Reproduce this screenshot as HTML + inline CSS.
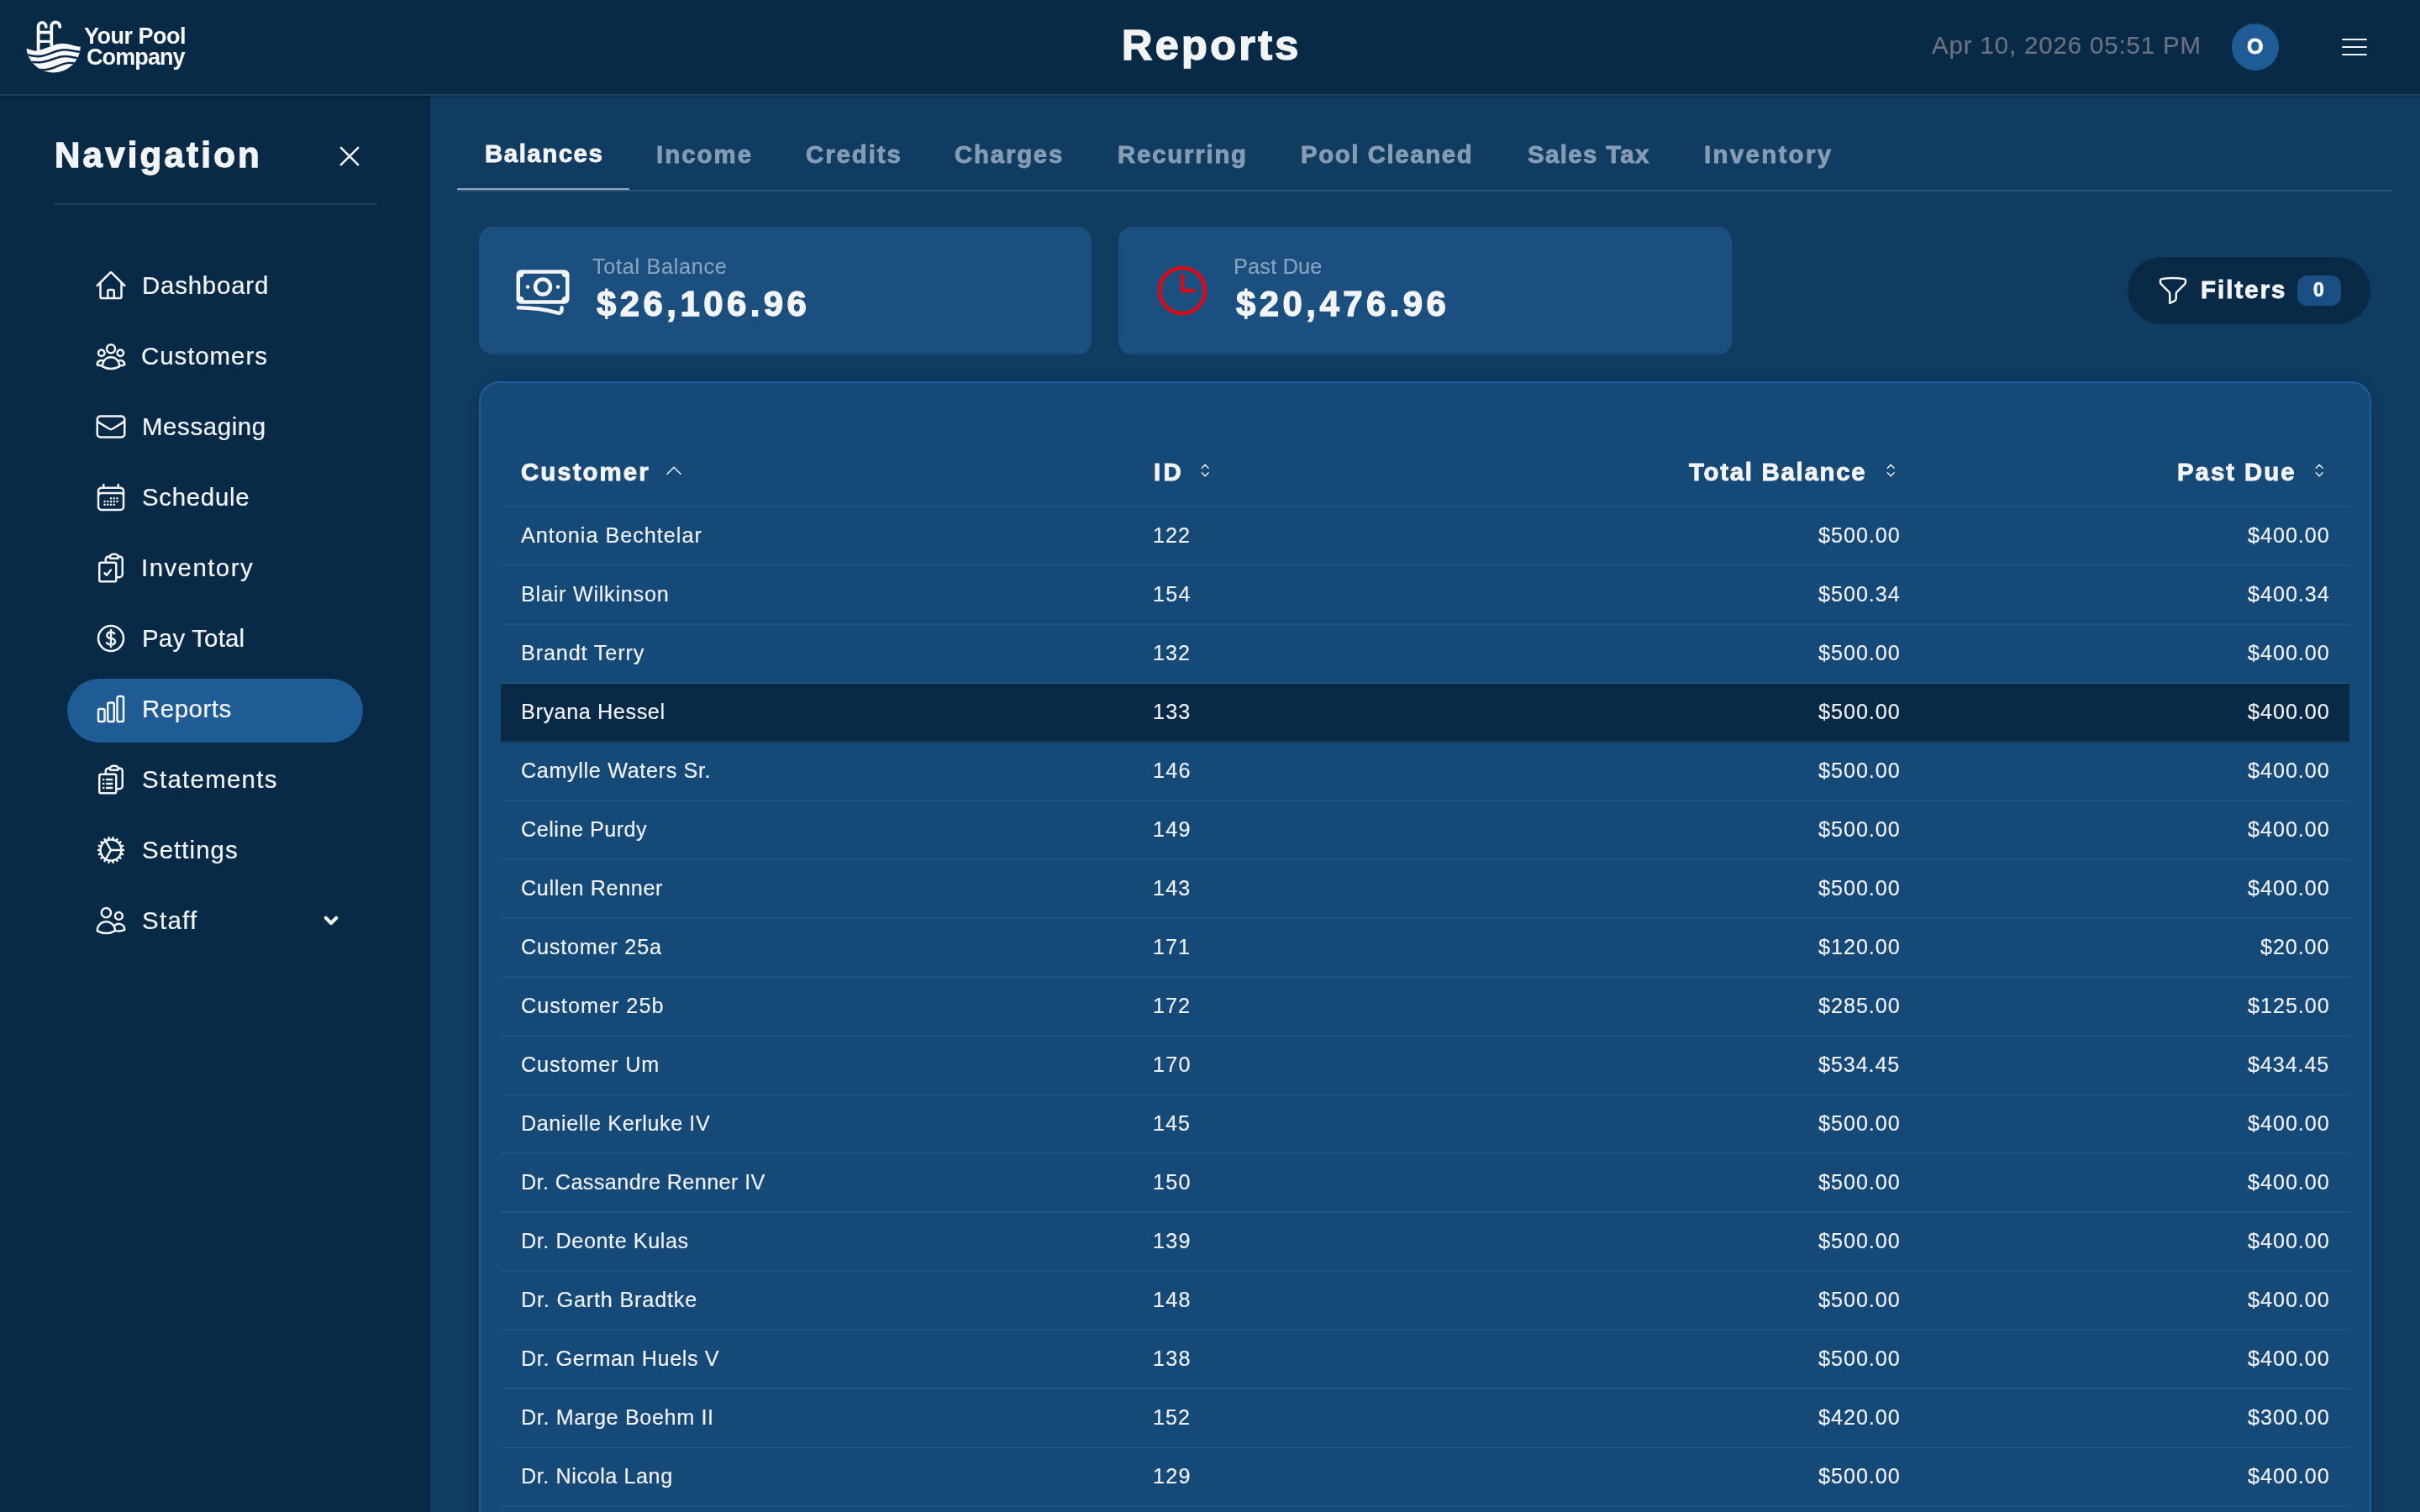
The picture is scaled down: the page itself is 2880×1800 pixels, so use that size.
<!DOCTYPE html>
<html><head><meta charset="utf-8">
<style>
*{box-sizing:border-box;margin:0;padding:0}
html,body{width:2880px;height:1800px;overflow:hidden;background:#103c62}
body{font-family:"Liberation Sans",sans-serif;color:#f3f4f6}
#app{position:absolute;left:0;top:0;width:1440px;height:900px;zoom:2;overflow:hidden;background:#103c62}
.abs{position:absolute}
.t{position:absolute;white-space:nowrap;line-height:1;will-change:transform}
svg{position:absolute;overflow:visible}
@media (max-width:2000px){html,body{width:1440px;height:900px} #app{zoom:1}}
</style></head>
<body>
<div id="app">
<div class="abs" style="left:0px;top:0px;width:1440px;height:56px;background:#082a47;"></div>
<div class="abs" style="left:0px;top:56px;width:1440px;height:1px;background:#21405e;"></div>
<div class="abs" style="left:0px;top:57px;width:1440px;height:2px;background:linear-gradient(rgba(0,0,0,.18),rgba(0,0,0,0));z-index:5;"></div>
<svg style="left:10px;top:7.5px;width:105px;height:40px" viewBox="0 0 2420 922">
<defs><clipPath id="bowl"><circle cx="502" cy="452" r="373"/></clipPath></defs>
<g clip-path="url(#bowl)">
<path d="M0 470 C 150 470 200 540 300 520 C 450 480 520 420 650 425 C 760 430 800 470 900 470 L 900 922 L 0 922 Z" fill="#f8f9fb"/>
<path d="M0 560 C 150 570 220 610 320 600 C 460 580 540 505 660 510 C 760 515 820 540 900 540" stroke="#0b2846" stroke-width="30" fill="none"/>
<path d="M0 660 C 150 670 240 690 340 680 C 470 670 560 590 680 600 C 770 608 830 630 900 630" stroke="#0b2846" stroke-width="30" fill="none"/>
<path d="M0 760 C 150 770 260 780 370 785 C 500 790 600 690 720 690 C 800 690 850 700 900 700" stroke="#0b2846" stroke-width="28" fill="none"/>
</g>
<path d="M295 505 V190 A52 52 0 0 1 400 190 V195" stroke="#f8f9fb" stroke-width="44" fill="none" stroke-linecap="round"/>
<path d="M475 440 V190 A57 57 0 0 1 590 190 V195" stroke="#f8f9fb" stroke-width="44" fill="none" stroke-linecap="round"/>
<rect x="295" y="250" width="180" height="42" fill="#f8f9fb"/>
<rect x="295" y="378" width="180" height="36" fill="#f8f9fb"/>
</svg>
<div class="t" style="left:49.90px;top:15.07px;font-size:13.5px;font-weight:bold;color:#f8f9fb;letter-spacing:-0.250px;">Your Pool</div>
<div class="t" style="left:51.40px;top:27.32px;font-size:13.5px;font-weight:bold;color:#f8f9fb;letter-spacing:-0.450px;">Company</div>
<div class="t" style="left:667.49px;top:14.71px;font-size:25.2px;font-weight:bold;-webkit-text-stroke:0.756px #f3f4f6;color:#f3f4f6;letter-spacing:1.667px;">Reports</div>
<div class="t" style="left:1149.53px;top:19.70px;font-size:14.7px;-webkit-text-stroke:0.103px #6b7280;color:#6b7280;letter-spacing:0.444px;">Apr 10, 2026 05:51 PM</div>
<div class="abs" style="left:1328px;top:14px;width:28px;height:28px;background:#1f5c96;border-radius:50%;"></div>
<div class="t" style="left:1337.02px;top:21.63px;font-size:12.6px;font-weight:bold;-webkit-text-stroke:0.378px #f8f9fb;color:#f8f9fb;letter-spacing:0.000px;">O</div>
<div class="abs" style="left:1393.5px;top:22.98px;width:15.1px;height:1.25px;background:#f3f4f6;border-radius:1px;"></div>
<div class="abs" style="left:1393.5px;top:27.43px;width:15.1px;height:1.25px;background:#f3f4f6;border-radius:1px;"></div>
<div class="abs" style="left:1393.5px;top:31.78px;width:15.1px;height:1.25px;background:#f3f4f6;border-radius:1px;"></div>
<div class="abs" style="left:0px;top:57px;width:256px;height:843px;background:#082a47;"></div>
<div class="t" style="left:32.38px;top:82.17px;font-size:21.0px;font-weight:bold;-webkit-text-stroke:0.63px #f3f4f6;color:#f3f4f6;letter-spacing:1.611px;">Navigation</div>
<svg style="left:200px;top:85px;width:16px;height:16px" viewBox="0 0 16 16"><path d="M2.9 2.9 13.1 13.1M13.1 2.9 2.9 13.1" stroke="#f3f4f6" stroke-width="1.25" stroke-linecap="round"/></svg>
<div class="abs" style="left:32px;top:121px;width:192px;height:1px;background:#1f3c5a;"></div>
<div class="abs" style="left:40px;top:404px;width:176px;height:38px;background:#1f5c96;border-radius:19px;"></div>
<svg style="left:56px;top:160.0px;width:20px;height:20px" viewBox="0 0 24 24" fill="none" stroke="#f3f4f6" stroke-width="1.5" stroke-linecap="round" stroke-linejoin="round"><path d="m2.25 12 8.954-8.955c.44-.439 1.152-.439 1.591 0L21.75 12M4.5 9.75v10.125c0 .621.504 1.125 1.125 1.125H9.75v-4.875c0-.621.504-1.125 1.125-1.125h2.25c.621 0 1.125.504 1.125 1.125V21h4.125c.621 0 1.125-.504 1.125-1.125V9.75M8.25 21h8.25"/></svg>
<div class="t" style="left:84.25px;top:162.45px;font-size:14.7px;-webkit-text-stroke:0.103px #f3f4f6;color:#f3f4f6;letter-spacing:0.406px;">Dashboard</div>
<svg style="left:56px;top:202.0px;width:20px;height:20px" viewBox="0 0 24 24" fill="none" stroke="#f3f4f6" stroke-width="1.5" stroke-linecap="round" stroke-linejoin="round"><path d="M18 18.72a9.094 9.094 0 0 0 3.741-.479 3 3 0 0 0-4.682-2.72m.94 3.198.001.031c0 .225-.012.447-.037.666A11.944 11.944 0 0 1 12 21c-2.17 0-4.207-.576-5.963-1.584A6.062 6.062 0 0 1 6 18.719m12 0a5.971 5.971 0 0 0-.941-3.197m0 0A5.995 5.995 0 0 0 12 12.75a5.995 5.995 0 0 0-5.058 2.772m0 0a3 3 0 0 0-4.681 2.72 8.986 8.986 0 0 0 3.74.477m.94-3.197a5.971 5.971 0 0 0-.94 3.197M15 6.75a3 3 0 1 1-6 0 3 3 0 0 1 6 0Zm6 3a2.25 2.25 0 1 1-4.5 0 2.25 2.25 0 0 1 4.5 0Zm-13.5 0a2.25 2.25 0 1 1-4.5 0 2.25 2.25 0 0 1 4.5 0Z"/></svg>
<div class="t" style="left:84.00px;top:204.45px;font-size:14.7px;-webkit-text-stroke:0.103px #f3f4f6;color:#f3f4f6;letter-spacing:0.484px;">Customers</div>
<svg style="left:56px;top:244.0px;width:20px;height:20px" viewBox="0 0 24 24" fill="none" stroke="#f3f4f6" stroke-width="1.5" stroke-linecap="round" stroke-linejoin="round"><path d="M21.75 6.75v10.5a2.25 2.25 0 0 1-2.25 2.25h-15a2.25 2.25 0 0 1-2.25-2.25V6.75m19.5 0A2.25 2.25 0 0 0 19.5 4.5h-15a2.25 2.25 0 0 0-2.25 2.25m19.5 0v.243a2.25 2.25 0 0 1-1.07 1.916l-7.5 4.615a2.25 2.25 0 0 1-2.36 0L3.32 8.91a2.25 2.25 0 0 1-1.07-1.916V6.75"/></svg>
<div class="t" style="left:84.25px;top:246.45px;font-size:14.7px;-webkit-text-stroke:0.103px #f3f4f6;color:#f3f4f6;letter-spacing:0.312px;">Messaging</div>
<svg style="left:56px;top:286.0px;width:20px;height:20px" viewBox="0 0 24 24" fill="none" stroke="#f3f4f6" stroke-width="1.5" stroke-linecap="round" stroke-linejoin="round"><path d="M6.75 3v2.25M17.25 3v2.25M3 18.75V7.5a2.25 2.25 0 0 1 2.25-2.25h13.5A2.25 2.25 0 0 1 21 7.5v11.25m-18 0A2.25 2.25 0 0 0 5.25 21h13.5A2.25 2.25 0 0 0 21 18.75m-18 0v-7.5A2.25 2.25 0 0 1 5.25 9h13.5A2.25 2.25 0 0 1 21 11.25v7.5m-9-6h.008v.008H12v-.008ZM12 15h.008v.008H12V15Zm0 2.25h.008v.008H12v-.008ZM9.75 15h.008v.008H9.75V15Zm0 2.25h.008v.008H9.75v-.008ZM7.5 15h.008v.008H7.5V15Zm0 2.25h.008v.008H7.5v-.008Zm6.75-4.5h.008v.008h-.008v-.008Zm0 2.25h.008v.008h-.008V15Zm0 2.25h.008v.008h-.008v-.008Zm2.25-4.5h.008v.008H16.5v-.008Zm0 2.25h.008v.008H16.5V15Z"/></svg>
<div class="t" style="left:84.25px;top:288.45px;font-size:14.7px;-webkit-text-stroke:0.103px #f3f4f6;color:#f3f4f6;letter-spacing:0.357px;">Schedule</div>
<svg style="left:56px;top:328.0px;width:20px;height:20px" viewBox="0 0 24 24" fill="none" stroke="#f3f4f6" stroke-width="1.5" stroke-linecap="round" stroke-linejoin="round"><path d="M11.35 3.836c-.065.21-.1.433-.1.664 0 .414.336.75.75.75h4.5a.75.75 0 0 0 .75-.75 2.25 2.25 0 0 0-.1-.664m-5.8 0A2.251 2.251 0 0 1 13.5 2.25H15c1.012 0 1.867.668 2.15 1.586m-5.8 0c-.376.023-.75.05-1.124.08C9.095 4.01 8.25 4.973 8.25 6.108V8.25m8.9-4.414c.376.023.75.05 1.124.08 1.131.094 1.976 1.057 1.976 2.192V16.5A2.25 2.25 0 0 1 18 18.75h-2.25m-7.5-10.5H4.875c-.621 0-1.125.504-1.125 1.125v11.25c0 .621.504 1.125 1.125 1.125h9.75c.621 0 1.125-.504 1.125-1.125V18.75m-7.5-10.5h6.375c.621 0 1.125.504 1.125 1.125v9.375m-8.25-3 1.5 1.5 3-3.75"/></svg>
<div class="t" style="left:84.00px;top:330.45px;font-size:14.7px;-webkit-text-stroke:0.103px #f3f4f6;color:#f3f4f6;letter-spacing:0.734px;">Inventory</div>
<svg style="left:56px;top:370.0px;width:20px;height:20px" viewBox="0 0 24 24" fill="none" stroke="#f3f4f6" stroke-width="1.5" stroke-linecap="round" stroke-linejoin="round"><path d="M12 6v12m-3-2.818.879.659c1.171.879 3.07.879 4.242 0 1.172-.879 1.172-2.303 0-3.182C13.536 12.219 12.768 12 12 12c-.725 0-1.45-.22-2.003-.659-1.106-.879-1.106-2.303 0-3.182s2.9-.879 4.006 0l.415.33M21 12a9 9 0 1 1-18 0 9 9 0 0 1 18 0Z"/></svg>
<div class="t" style="left:84.25px;top:372.45px;font-size:14.7px;-webkit-text-stroke:0.103px #f3f4f6;color:#f3f4f6;letter-spacing:0.109px;">Pay Total</div>
<svg style="left:56px;top:412.0px;width:20px;height:20px" viewBox="0 0 24 24" fill="none" stroke="#f3f4f6" stroke-width="1.5" stroke-linecap="round" stroke-linejoin="round"><path d="M3 13.125C3 12.504 3.504 12 4.125 12h2.25c.621 0 1.125.504 1.125 1.125v6.75C7.5 20.496 6.996 21 6.375 21h-2.25A1.125 1.125 0 0 1 3 19.875v-6.75ZM9.75 8.625c0-.621.504-1.125 1.125-1.125h2.25c.621 0 1.125.504 1.125 1.125v11.25c0 .621-.504 1.125-1.125 1.125h-2.25a1.125 1.125 0 0 1-1.125-1.125V8.625ZM16.5 4.125c0-.621.504-1.125 1.125-1.125h2.25C20.496 3 21 3.504 21 4.125v15.75c0 .621-.504 1.125-1.125 1.125h-2.25a1.125 1.125 0 0 1-1.125-1.125V4.125Z"/></svg>
<div class="t" style="left:84.25px;top:414.45px;font-size:14.7px;-webkit-text-stroke:0.103px #f3f4f6;color:#f3f4f6;letter-spacing:0.271px;">Reports</div>
<svg style="left:56px;top:454.0px;width:20px;height:20px" viewBox="0 0 24 24" fill="none" stroke="#f3f4f6" stroke-width="1.5" stroke-linecap="round" stroke-linejoin="round"><path d="M9 12h3.75M9 15h3.75M9 18h3.75m3 .75H18a2.25 2.25 0 0 0 2.25-2.25V6.108c0-1.135-.845-2.098-1.976-2.192a48.424 48.424 0 0 0-1.123-.08m-5.801 0c-.065.21-.1.433-.1.664 0 .414.336.75.75.75h4.5a.75.75 0 0 0 .75-.75 2.25 2.25 0 0 0-.1-.664m-5.8 0A2.251 2.251 0 0 1 13.5 2.25H15c1.012 0 1.867.668 2.15 1.586m-5.8 0c-.376.023-.75.05-1.124.08C9.095 4.01 8.25 4.973 8.25 6.108V8.25m0 0H4.875c-.621 0-1.125.504-1.125 1.125v11.25c0 .621.504 1.125 1.125 1.125h9.75c.621 0 1.125-.504 1.125-1.125V9.375c0-.621-.504-1.125-1.125-1.125H8.25ZM6.75 12h.008v.008H6.75V12Zm0 3h.008v.008H6.75V15Zm0 3h.008v.008H6.75V18Z"/></svg>
<div class="t" style="left:84.25px;top:456.45px;font-size:14.7px;-webkit-text-stroke:0.103px #f3f4f6;color:#f3f4f6;letter-spacing:0.653px;">Statements</div>
<svg style="left:56px;top:496.0px;width:20px;height:20px" viewBox="0 0 24 24" fill="none" stroke="#f3f4f6" stroke-width="1.5" stroke-linecap="round" stroke-linejoin="round"><path d="M4.5 12a7.5 7.5 0 0 0 15 0m-15 0a7.5 7.5 0 1 1 15 0m-15 0H3m16.5 0H21m-1.5 0H12m-8.457 3.077 1.41-.513m14.095-5.13 1.41-.513M5.106 17.785l1.15-.964m11.49-9.642 1.149-.964M7.501 19.795l.75-1.3m7.5-12.99.75-1.3m-6.063 16.658.26-1.477m2.605-14.772.26-1.477m0 17.726-.26-1.477M10.698 4.614l-.26-1.477M16.5 19.794l-.75-1.299M7.5 4.205 12 12m6.894 5.785-1.149-.964M6.256 7.178l-1.15-.964m15.352 8.864-1.41-.513M4.954 9.435l-1.41-.514M12.002 12l-3.75 6.495"/></svg>
<div class="t" style="left:84.25px;top:498.45px;font-size:14.7px;-webkit-text-stroke:0.103px #f3f4f6;color:#f3f4f6;letter-spacing:0.536px;">Settings</div>
<svg style="left:56px;top:538.0px;width:20px;height:20px" viewBox="0 0 24 24" fill="none" stroke="#f3f4f6" stroke-width="1.5" stroke-linecap="round" stroke-linejoin="round"><path d="M15 19.128a9.38 9.38 0 0 0 2.625.372 9.337 9.337 0 0 0 4.121-.952 4.125 4.125 0 0 0-7.533-2.493M15 19.128v-.003c0-1.113-.285-2.16-.786-3.07M15 19.128v.106A12.318 12.318 0 0 1 8.624 21c-2.331 0-4.512-.645-6.374-1.766l-.001-.109a6.375 6.375 0 0 1 11.964-3.07M12 6.375a3.375 3.375 0 1 1-6.75 0 3.375 3.375 0 0 1 6.75 0Zm8.25 2.25a2.625 2.625 0 1 1-5.25 0 2.625 2.625 0 0 1 5.25 0Z"/></svg>
<div class="t" style="left:84.25px;top:540.45px;font-size:14.7px;-webkit-text-stroke:0.103px #f3f4f6;color:#f3f4f6;letter-spacing:0.656px;">Staff</div>
<svg style="left:191px;top:542.0px;width:12px;height:12px" viewBox="0 0 12 12"><path d="M2.9 4.4 6 7.5 9.1 4.4" stroke="#f3f4f6" stroke-width="2.1" fill="none" stroke-linecap="round" stroke-linejoin="round"/></svg>
<div class="abs" style="left:256px;top:57px;width:1184px;height:843px;background:#103c62;"></div>
<div class="abs" style="left:272px;top:113px;width:1152px;height:1px;background:#2f5479;"></div>
<div class="t" style="left:288.25px;top:83.80px;font-size:14.7px;font-weight:bold;-webkit-text-stroke:0.441px #f3f4f6;color:#f3f4f6;letter-spacing:0.768px;">Balances</div>
<div class="abs" style="left:272px;top:112px;width:102.46875px;height:1px;background:#8fa6be;"></div>
<div class="t" style="left:390.72px;top:84.60px;font-size:14.7px;font-weight:bold;-webkit-text-stroke:0.441px #869cb4;color:#869cb4;letter-spacing:1.025px;">Income</div>
<div class="t" style="left:479.65px;top:84.60px;font-size:14.7px;font-weight:bold;-webkit-text-stroke:0.441px #869cb4;color:#869cb4;letter-spacing:0.958px;">Credits</div>
<div class="t" style="left:568.18px;top:84.60px;font-size:14.7px;font-weight:bold;-webkit-text-stroke:0.441px #869cb4;color:#869cb4;letter-spacing:0.896px;">Charges</div>
<div class="t" style="left:664.88px;top:84.60px;font-size:14.7px;font-weight:bold;-webkit-text-stroke:0.441px #869cb4;color:#869cb4;letter-spacing:0.891px;">Recurring</div>
<div class="t" style="left:774.03px;top:84.60px;font-size:14.7px;font-weight:bold;-webkit-text-stroke:0.441px #869cb4;color:#869cb4;letter-spacing:0.795px;">Pool Cleaned</div>
<div class="t" style="left:909.08px;top:84.60px;font-size:14.7px;font-weight:bold;-webkit-text-stroke:0.441px #869cb4;color:#869cb4;letter-spacing:0.688px;">Sales Tax</div>
<div class="t" style="left:1013.97px;top:84.60px;font-size:14.7px;font-weight:bold;-webkit-text-stroke:0.441px #869cb4;color:#869cb4;letter-spacing:1.172px;">Inventory</div>
<div class="abs" style="left:285px;top:135px;width:364.67px;height:76px;background:#1a4f80;border-radius:8px;"></div>
<svg style="left:305px;top:155px;width:36px;height:36px" viewBox="0 0 24 24" fill="none" stroke="#f3f4f6" stroke-width="1.5" stroke-linecap="round" stroke-linejoin="round"><path d="M2.25 18.75a60.07 60.07 0 0 1 15.797 2.101c.727.198 1.453-.342 1.453-1.096V18.75M3.75 4.5v.75A.75.75 0 0 1 3 6h-.75m0 0v-.375c0-.621.504-1.125 1.125-1.125H20.25M2.25 6v9m18-10.5v.75c0 .414.336.75.75.75h.75m-1.5-1.5h.375c.621 0 1.125.504 1.125 1.125v9.75c0 .621-.504 1.125-1.125 1.125h-.375m1.5-1.5H21a.75.75 0 0 0-.75.75v.75m0 0H3.75m0 0h-.375a1.125 1.125 0 0 1-1.125-1.125V15m1.5 1.5v-.75A.75.75 0 0 0 3 15h-.75M15 10.5a3 3 0 1 1-6 0 3 3 0 0 1 6 0Zm3 0h.008v.008H18V10.5Zm-12 0h.008v.008H6V10.5Z"/></svg>
<div class="t" style="left:352.62px;top:152.63px;font-size:12.6px;-webkit-text-stroke:0.088px #88a3be;color:#88a3be;letter-spacing:0.354px;">Total Balance</div>
<div class="t" style="left:354.75px;top:170.42px;font-size:21.0px;font-weight:bold;-webkit-text-stroke:0.63px #f3f4f6;color:#f3f4f6;letter-spacing:2.208px;">$26,106.96</div>
<div class="abs" style="left:665.67px;top:135px;width:364.67px;height:76px;background:#1a4f80;border-radius:8px;"></div>
<svg style="left:685.67px;top:155px;width:36px;height:36px" viewBox="0 0 24 24" fill="none" stroke="#dc0a14" stroke-width="1.5" stroke-linecap="round" stroke-linejoin="round"><path d="M12 6v6h4.5m4.5 0a9 9 0 1 1-18 0 9 9 0 0 1 18 0Z"/></svg>
<div class="t" style="left:733.79px;top:152.63px;font-size:12.6px;-webkit-text-stroke:0.088px #88a3be;color:#88a3be;letter-spacing:0.125px;">Past Due</div>
<div class="t" style="left:735.42px;top:170.42px;font-size:21.0px;font-weight:bold;-webkit-text-stroke:0.63px #f3f4f6;color:#f3f4f6;letter-spacing:2.208px;">$20,476.96</div>
<div class="abs" style="left:1266px;top:153px;width:144.5px;height:40px;background:#082a47;border-radius:20px;"></div>
<svg style="left:1283px;top:163px;width:20px;height:20px" viewBox="0 0 24 24" fill="none" stroke="#f3f4f6" stroke-width="1.5" stroke-linecap="round" stroke-linejoin="round"><path d="M12 3c2.755 0 5.455.232 8.083.678.533.09.917.556.917 1.096v1.044a2.25 2.25 0 0 1-.659 1.591l-5.432 5.432a2.25 2.25 0 0 0-.659 1.591v2.927a2.25 2.25 0 0 1-1.244 2.013L9.75 21v-6.568a2.25 2.25 0 0 0-.659-1.591L3.659 7.409A2.25 2.25 0 0 1 3 5.818V4.774c0-.54.384-1.006.917-1.096A48.32 48.32 0 0 1 12 3Z"/></svg>
<div class="t" style="left:1309.25px;top:164.75px;font-size:14.7px;font-weight:bold;-webkit-text-stroke:0.441px #f3f4f6;color:#f3f4f6;letter-spacing:1.021px;">Filters</div>
<div class="abs" style="left:1367px;top:164px;width:26px;height:18px;background:#1b4f84;border-radius:6px;"></div>
<div class="t" style="left:1376.30px;top:167.22px;font-size:11.55px;font-weight:bold;-webkit-text-stroke:0.347px #f3f4f6;color:#f3f4f6;letter-spacing:0.000px;">0</div>
<div class="abs" style="left:285px;top:227px;width:1126px;height:700px;background:#154978;border:1px solid #1f5e9e;border-radius:12px;box-sizing:border-box;box-shadow:0 2px 8px rgba(0,0,0,.18);"></div>
<div class="t" style="left:310.00px;top:273.70px;font-size:14.7px;font-weight:bold;-webkit-text-stroke:0.441px #f3f4f6;color:#f3f4f6;letter-spacing:1.036px;">Customer</div>
<svg style="left:395px;top:275px;width:12px;height:12px" viewBox="0 0 12 12"><path d="M2 7.1 6 3.1 10 7.1" stroke="#f3f4f6" stroke-width="0.75" fill="none" stroke-linecap="round" stroke-linejoin="round"/></svg>
<div class="t" style="left:686.25px;top:273.70px;font-size:14.7px;font-weight:bold;-webkit-text-stroke:0.441px #f3f4f6;color:#f3f4f6;letter-spacing:1.625px;">ID</div>
<svg style="left:711px;top:274px;width:12px;height:12px" viewBox="0 0 12 12"><path d="M4.15 4.6 6.1 2.65 8.05 4.6M4.15 7.4 6.1 9.35 8.05 7.4" stroke="#f3f4f6" stroke-width="0.7" fill="none" stroke-linecap="round" stroke-linejoin="round"/></svg>
<div class="t" style="left:1005.12px;top:273.70px;font-size:14.7px;font-weight:bold;-webkit-text-stroke:0.441px #f3f4f6;color:#f3f4f6;letter-spacing:0.865px;">Total Balance</div>
<svg style="left:1119px;top:274px;width:12px;height:12px" viewBox="0 0 12 12"><path d="M4.15 4.6 6.1 2.65 8.05 4.6M4.15 7.4 6.1 9.35 8.05 7.4" stroke="#f3f4f6" stroke-width="0.7" fill="none" stroke-linecap="round" stroke-linejoin="round"/></svg>
<div class="t" style="left:1295.43px;top:273.70px;font-size:14.7px;font-weight:bold;-webkit-text-stroke:0.441px #f3f4f6;color:#f3f4f6;letter-spacing:0.982px;">Past Due</div>
<svg style="left:1374px;top:274px;width:12px;height:12px" viewBox="0 0 12 12"><path d="M4.15 4.6 6.1 2.65 8.05 4.6M4.15 7.4 6.1 9.35 8.05 7.4" stroke="#f3f4f6" stroke-width="0.7" fill="none" stroke-linecap="round" stroke-linejoin="round"/></svg>
<div class="abs" style="left:298px;top:301px;width:1100px;height:1px;background:rgba(255,255,255,0.055);"></div>
<div class="t" style="left:310.12px;top:312.53px;font-size:12.6px;-webkit-text-stroke:0.088px #eff1f4;color:#eff1f4;letter-spacing:0.500px;">Antonia Bechtelar</div>
<div class="t" style="left:686.08px;top:312.53px;font-size:12.6px;-webkit-text-stroke:0.088px #eff1f4;color:#eff1f4;letter-spacing:0.500px;">122</div>
<div class="t" style="left:1081.75px;top:312.53px;font-size:12.6px;-webkit-text-stroke:0.088px #eff1f4;color:#eff1f4;letter-spacing:0.479px;">$500.00</div>
<div class="t" style="left:1337.25px;top:312.53px;font-size:12.6px;-webkit-text-stroke:0.088px #eff1f4;color:#eff1f4;letter-spacing:0.479px;">$400.00</div>
<div class="abs" style="left:298px;top:336px;width:1100px;height:1px;background:rgba(255,255,255,0.055);"></div>
<div class="t" style="left:310.12px;top:347.53px;font-size:12.6px;-webkit-text-stroke:0.088px #eff1f4;color:#eff1f4;letter-spacing:0.375px;">Blair Wilkinson</div>
<div class="t" style="left:686.08px;top:347.53px;font-size:12.6px;-webkit-text-stroke:0.088px #eff1f4;color:#eff1f4;letter-spacing:0.625px;">154</div>
<div class="t" style="left:1081.75px;top:347.53px;font-size:12.6px;-webkit-text-stroke:0.088px #eff1f4;color:#eff1f4;letter-spacing:0.479px;">$500.34</div>
<div class="t" style="left:1337.25px;top:347.53px;font-size:12.6px;-webkit-text-stroke:0.088px #eff1f4;color:#eff1f4;letter-spacing:0.479px;">$400.34</div>
<div class="abs" style="left:298px;top:371px;width:1100px;height:1px;background:rgba(255,255,255,0.055);"></div>
<div class="t" style="left:310.12px;top:382.53px;font-size:12.6px;-webkit-text-stroke:0.088px #eff1f4;color:#eff1f4;letter-spacing:0.432px;">Brandt Terry</div>
<div class="t" style="left:686.08px;top:382.53px;font-size:12.6px;-webkit-text-stroke:0.088px #eff1f4;color:#eff1f4;letter-spacing:0.500px;">132</div>
<div class="t" style="left:1081.75px;top:382.53px;font-size:12.6px;-webkit-text-stroke:0.088px #eff1f4;color:#eff1f4;letter-spacing:0.479px;">$500.00</div>
<div class="t" style="left:1337.25px;top:382.53px;font-size:12.6px;-webkit-text-stroke:0.088px #eff1f4;color:#eff1f4;letter-spacing:0.479px;">$400.00</div>
<div class="abs" style="left:298px;top:406px;width:1100px;height:1px;background:rgba(255,255,255,0.055);"></div>
<div class="abs" style="left:298px;top:407px;width:1100px;height:35px;background:#082a47;"></div>
<div class="t" style="left:310.12px;top:417.53px;font-size:12.6px;-webkit-text-stroke:0.088px #eff1f4;color:#eff1f4;letter-spacing:0.302px;">Bryana Hessel</div>
<div class="t" style="left:686.08px;top:417.53px;font-size:12.6px;-webkit-text-stroke:0.088px #eff1f4;color:#eff1f4;letter-spacing:0.562px;">133</div>
<div class="t" style="left:1081.75px;top:417.53px;font-size:12.6px;-webkit-text-stroke:0.088px #eff1f4;color:#eff1f4;letter-spacing:0.479px;">$500.00</div>
<div class="t" style="left:1337.25px;top:417.53px;font-size:12.6px;-webkit-text-stroke:0.088px #eff1f4;color:#eff1f4;letter-spacing:0.479px;">$400.00</div>
<div class="abs" style="left:298px;top:441px;width:1100px;height:1px;background:rgba(255,255,255,0.055);"></div>
<div class="t" style="left:310.00px;top:452.53px;font-size:12.6px;-webkit-text-stroke:0.088px #eff1f4;color:#eff1f4;letter-spacing:0.324px;">Camylle Waters Sr.</div>
<div class="t" style="left:686.08px;top:452.53px;font-size:12.6px;-webkit-text-stroke:0.088px #eff1f4;color:#eff1f4;letter-spacing:0.625px;">146</div>
<div class="t" style="left:1081.75px;top:452.53px;font-size:12.6px;-webkit-text-stroke:0.088px #eff1f4;color:#eff1f4;letter-spacing:0.479px;">$500.00</div>
<div class="t" style="left:1337.25px;top:452.53px;font-size:12.6px;-webkit-text-stroke:0.088px #eff1f4;color:#eff1f4;letter-spacing:0.479px;">$400.00</div>
<div class="abs" style="left:298px;top:476px;width:1100px;height:1px;background:rgba(255,255,255,0.055);"></div>
<div class="t" style="left:310.00px;top:487.53px;font-size:12.6px;-webkit-text-stroke:0.088px #eff1f4;color:#eff1f4;letter-spacing:0.250px;">Celine Purdy</div>
<div class="t" style="left:686.08px;top:487.53px;font-size:12.6px;-webkit-text-stroke:0.088px #eff1f4;color:#eff1f4;letter-spacing:0.625px;">149</div>
<div class="t" style="left:1081.75px;top:487.53px;font-size:12.6px;-webkit-text-stroke:0.088px #eff1f4;color:#eff1f4;letter-spacing:0.479px;">$500.00</div>
<div class="t" style="left:1337.25px;top:487.53px;font-size:12.6px;-webkit-text-stroke:0.088px #eff1f4;color:#eff1f4;letter-spacing:0.479px;">$400.00</div>
<div class="abs" style="left:298px;top:511px;width:1100px;height:1px;background:rgba(255,255,255,0.055);"></div>
<div class="t" style="left:310.00px;top:522.53px;font-size:12.6px;-webkit-text-stroke:0.088px #eff1f4;color:#eff1f4;letter-spacing:0.312px;">Cullen Renner</div>
<div class="t" style="left:686.08px;top:522.53px;font-size:12.6px;-webkit-text-stroke:0.088px #eff1f4;color:#eff1f4;letter-spacing:0.562px;">143</div>
<div class="t" style="left:1081.75px;top:522.53px;font-size:12.6px;-webkit-text-stroke:0.088px #eff1f4;color:#eff1f4;letter-spacing:0.479px;">$500.00</div>
<div class="t" style="left:1337.25px;top:522.53px;font-size:12.6px;-webkit-text-stroke:0.088px #eff1f4;color:#eff1f4;letter-spacing:0.479px;">$400.00</div>
<div class="abs" style="left:298px;top:546px;width:1100px;height:1px;background:rgba(255,255,255,0.055);"></div>
<div class="t" style="left:310.00px;top:557.53px;font-size:12.6px;-webkit-text-stroke:0.088px #eff1f4;color:#eff1f4;letter-spacing:0.398px;">Customer 25a</div>
<div class="t" style="left:686.08px;top:557.53px;font-size:12.6px;-webkit-text-stroke:0.088px #eff1f4;color:#eff1f4;letter-spacing:0.500px;">171</div>
<div class="t" style="left:1081.75px;top:557.53px;font-size:12.6px;-webkit-text-stroke:0.088px #eff1f4;color:#eff1f4;letter-spacing:0.479px;">$120.00</div>
<div class="t" style="left:1344.89px;top:557.53px;font-size:12.6px;-webkit-text-stroke:0.088px #eff1f4;color:#eff1f4;letter-spacing:0.450px;">$20.00</div>
<div class="abs" style="left:298px;top:581px;width:1100px;height:1px;background:rgba(255,255,255,0.055);"></div>
<div class="t" style="left:310.00px;top:592.53px;font-size:12.6px;-webkit-text-stroke:0.088px #eff1f4;color:#eff1f4;letter-spacing:0.511px;">Customer 25b</div>
<div class="t" style="left:686.08px;top:592.53px;font-size:12.6px;-webkit-text-stroke:0.088px #eff1f4;color:#eff1f4;letter-spacing:0.500px;">172</div>
<div class="t" style="left:1081.75px;top:592.53px;font-size:12.6px;-webkit-text-stroke:0.088px #eff1f4;color:#eff1f4;letter-spacing:0.479px;">$285.00</div>
<div class="t" style="left:1337.25px;top:592.53px;font-size:12.6px;-webkit-text-stroke:0.088px #eff1f4;color:#eff1f4;letter-spacing:0.479px;">$125.00</div>
<div class="abs" style="left:298px;top:616px;width:1100px;height:1px;background:rgba(255,255,255,0.055);"></div>
<div class="t" style="left:310.00px;top:627.53px;font-size:12.6px;-webkit-text-stroke:0.088px #eff1f4;color:#eff1f4;letter-spacing:0.450px;">Customer Um</div>
<div class="t" style="left:686.08px;top:627.53px;font-size:12.6px;-webkit-text-stroke:0.088px #eff1f4;color:#eff1f4;letter-spacing:0.625px;">170</div>
<div class="t" style="left:1081.75px;top:627.53px;font-size:12.6px;-webkit-text-stroke:0.088px #eff1f4;color:#eff1f4;letter-spacing:0.438px;">$534.45</div>
<div class="t" style="left:1337.25px;top:627.53px;font-size:12.6px;-webkit-text-stroke:0.088px #eff1f4;color:#eff1f4;letter-spacing:0.438px;">$434.45</div>
<div class="abs" style="left:298px;top:651px;width:1100px;height:1px;background:rgba(255,255,255,0.055);"></div>
<div class="t" style="left:310.12px;top:662.53px;font-size:12.6px;-webkit-text-stroke:0.088px #eff1f4;color:#eff1f4;letter-spacing:0.292px;">Danielle Kerluke IV</div>
<div class="t" style="left:686.08px;top:662.53px;font-size:12.6px;-webkit-text-stroke:0.088px #eff1f4;color:#eff1f4;letter-spacing:0.500px;">145</div>
<div class="t" style="left:1081.75px;top:662.53px;font-size:12.6px;-webkit-text-stroke:0.088px #eff1f4;color:#eff1f4;letter-spacing:0.479px;">$500.00</div>
<div class="t" style="left:1337.25px;top:662.53px;font-size:12.6px;-webkit-text-stroke:0.088px #eff1f4;color:#eff1f4;letter-spacing:0.479px;">$400.00</div>
<div class="abs" style="left:298px;top:686px;width:1100px;height:1px;background:rgba(255,255,255,0.055);"></div>
<div class="t" style="left:310.12px;top:697.53px;font-size:12.6px;-webkit-text-stroke:0.088px #eff1f4;color:#eff1f4;letter-spacing:0.205px;">Dr. Cassandre Renner IV</div>
<div class="t" style="left:686.08px;top:697.53px;font-size:12.6px;-webkit-text-stroke:0.088px #eff1f4;color:#eff1f4;letter-spacing:0.625px;">150</div>
<div class="t" style="left:1081.75px;top:697.53px;font-size:12.6px;-webkit-text-stroke:0.088px #eff1f4;color:#eff1f4;letter-spacing:0.479px;">$500.00</div>
<div class="t" style="left:1337.25px;top:697.53px;font-size:12.6px;-webkit-text-stroke:0.088px #eff1f4;color:#eff1f4;letter-spacing:0.479px;">$400.00</div>
<div class="abs" style="left:298px;top:721px;width:1100px;height:1px;background:rgba(255,255,255,0.055);"></div>
<div class="t" style="left:310.12px;top:732.53px;font-size:12.6px;-webkit-text-stroke:0.088px #eff1f4;color:#eff1f4;letter-spacing:0.292px;">Dr. Deonte Kulas</div>
<div class="t" style="left:686.08px;top:732.53px;font-size:12.6px;-webkit-text-stroke:0.088px #eff1f4;color:#eff1f4;letter-spacing:0.625px;">139</div>
<div class="t" style="left:1081.75px;top:732.53px;font-size:12.6px;-webkit-text-stroke:0.088px #eff1f4;color:#eff1f4;letter-spacing:0.479px;">$500.00</div>
<div class="t" style="left:1337.25px;top:732.53px;font-size:12.6px;-webkit-text-stroke:0.088px #eff1f4;color:#eff1f4;letter-spacing:0.479px;">$400.00</div>
<div class="abs" style="left:298px;top:756px;width:1100px;height:1px;background:rgba(255,255,255,0.055);"></div>
<div class="t" style="left:310.12px;top:767.53px;font-size:12.6px;-webkit-text-stroke:0.088px #eff1f4;color:#eff1f4;letter-spacing:0.414px;">Dr. Garth Bradtke</div>
<div class="t" style="left:686.08px;top:767.53px;font-size:12.6px;-webkit-text-stroke:0.088px #eff1f4;color:#eff1f4;letter-spacing:0.625px;">148</div>
<div class="t" style="left:1081.75px;top:767.53px;font-size:12.6px;-webkit-text-stroke:0.088px #eff1f4;color:#eff1f4;letter-spacing:0.479px;">$500.00</div>
<div class="t" style="left:1337.25px;top:767.53px;font-size:12.6px;-webkit-text-stroke:0.088px #eff1f4;color:#eff1f4;letter-spacing:0.479px;">$400.00</div>
<div class="abs" style="left:298px;top:791px;width:1100px;height:1px;background:rgba(255,255,255,0.055);"></div>
<div class="t" style="left:310.12px;top:802.53px;font-size:12.6px;-webkit-text-stroke:0.088px #eff1f4;color:#eff1f4;letter-spacing:0.301px;">Dr. German Huels V</div>
<div class="t" style="left:686.08px;top:802.53px;font-size:12.6px;-webkit-text-stroke:0.088px #eff1f4;color:#eff1f4;letter-spacing:0.625px;">138</div>
<div class="t" style="left:1081.75px;top:802.53px;font-size:12.6px;-webkit-text-stroke:0.088px #eff1f4;color:#eff1f4;letter-spacing:0.479px;">$500.00</div>
<div class="t" style="left:1337.25px;top:802.53px;font-size:12.6px;-webkit-text-stroke:0.088px #eff1f4;color:#eff1f4;letter-spacing:0.479px;">$400.00</div>
<div class="abs" style="left:298px;top:826px;width:1100px;height:1px;background:rgba(255,255,255,0.055);"></div>
<div class="t" style="left:310.12px;top:837.53px;font-size:12.6px;-webkit-text-stroke:0.088px #eff1f4;color:#eff1f4;letter-spacing:0.316px;">Dr. Marge Boehm II</div>
<div class="t" style="left:686.08px;top:837.53px;font-size:12.6px;-webkit-text-stroke:0.088px #eff1f4;color:#eff1f4;letter-spacing:0.500px;">152</div>
<div class="t" style="left:1081.75px;top:837.53px;font-size:12.6px;-webkit-text-stroke:0.088px #eff1f4;color:#eff1f4;letter-spacing:0.479px;">$420.00</div>
<div class="t" style="left:1337.25px;top:837.53px;font-size:12.6px;-webkit-text-stroke:0.088px #eff1f4;color:#eff1f4;letter-spacing:0.479px;">$300.00</div>
<div class="abs" style="left:298px;top:861px;width:1100px;height:1px;background:rgba(255,255,255,0.055);"></div>
<div class="t" style="left:310.12px;top:872.53px;font-size:12.6px;-webkit-text-stroke:0.088px #eff1f4;color:#eff1f4;letter-spacing:0.286px;">Dr. Nicola Lang</div>
<div class="t" style="left:686.08px;top:872.53px;font-size:12.6px;-webkit-text-stroke:0.088px #eff1f4;color:#eff1f4;letter-spacing:0.625px;">129</div>
<div class="t" style="left:1081.75px;top:872.53px;font-size:12.6px;-webkit-text-stroke:0.088px #eff1f4;color:#eff1f4;letter-spacing:0.479px;">$500.00</div>
<div class="t" style="left:1337.25px;top:872.53px;font-size:12.6px;-webkit-text-stroke:0.088px #eff1f4;color:#eff1f4;letter-spacing:0.479px;">$400.00</div>
<div class="abs" style="left:298px;top:896px;width:1100px;height:1px;background:rgba(255,255,255,0.055);"></div>
<div class="t" style="left:310.12px;top:907.53px;font-size:12.6px;-webkit-text-stroke:0.088px #eff1f4;color:#eff1f4;letter-spacing:0.292px;">Dr. Pat Smith</div>
<div class="t" style="left:686.08px;top:907.53px;font-size:12.6px;-webkit-text-stroke:0.088px #eff1f4;color:#eff1f4;letter-spacing:0.625px;">160</div>
<div class="t" style="left:1081.75px;top:907.53px;font-size:12.6px;-webkit-text-stroke:0.088px #eff1f4;color:#eff1f4;letter-spacing:0.479px;">$500.00</div>
<div class="t" style="left:1337.25px;top:907.53px;font-size:12.6px;-webkit-text-stroke:0.088px #eff1f4;color:#eff1f4;letter-spacing:0.479px;">$400.00</div>
<div class="abs" style="left:298px;top:931px;width:1100px;height:1px;background:rgba(255,255,255,0.055);"></div>
</div>
</body></html>
